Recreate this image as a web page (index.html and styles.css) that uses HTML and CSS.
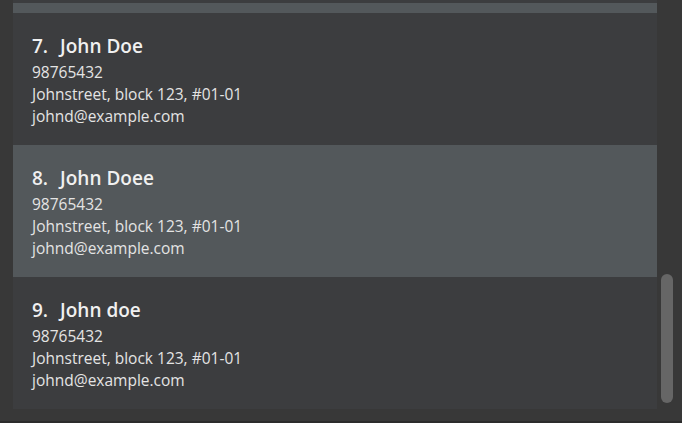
FILE: index.html
```html
<!DOCTYPE html>
<html>
<head>
<meta charset="utf-8">
<link rel="stylesheet" href="styles.css">
</head>
<body>
<div class="window">
  <div class="list">
    <div class="card card-partial">
      <div class="name-row"><span class="idx">6.</span><span class="name">John Doe</span></div>
      <div class="detail">98765432</div>
      <div class="detail">Johnstreet, block 123, #01-01</div>
      <div class="detail">johnd@example.com</div>
    </div>
    <div class="band"></div>
    <div class="card">
      <div class="name-row"><span class="idx">7.</span><span class="name">John Doe</span></div>
      <div class="detail">98765432</div>
      <div class="detail">Johnstreet, block 123, #01-01</div>
      <div class="detail">johnd@example.com</div>
    </div>
    <div class="card selected">
      <div class="name-row"><span class="idx">8.</span><span class="name">John Doee</span></div>
      <div class="detail">98765432</div>
      <div class="detail">Johnstreet, block 123, #01-01</div>
      <div class="detail">johnd@example.com</div>
    </div>
    <div class="card">
      <div class="name-row"><span class="idx">9.</span><span class="name">John doe</span></div>
      <div class="detail">98765432</div>
      <div class="detail">Johnstreet, block 123, #01-01</div>
      <div class="detail">johnd@example.com</div>
    </div>
  </div>
  <div class="scrollbar"><div class="thumb"></div></div>
</div>
<div class="bottom-line"></div>
</body>
</html>
```

FILE: styles.css
```css
html, body {
  margin: 0;
  padding: 0;
  background: #383838;
  width: 682px;
  height: 423px;
  overflow: hidden;
  font-family: "Open Sans", "Noto Sans", sans-serif;
}
.window {
  display: flex;
  height: 421px;
  padding-left: 13px;
  box-sizing: border-box;
}
.list {
  width: 644px;
  height: 409px;
  overflow: hidden;
  background: #3c3d3f;
}
.card {
  height: 132px;
  box-sizing: border-box;
  padding: 20px 0 0 19px;
  background: #3c3d3f;
}
.card-partial {
  margin-top: -129px;
}
.band {
  height: 10px;
  background: #53585b;
}
.selected {
  background: #53585b;
}
.name-row {
  display: flex;
  gap: 12px;
  font-size: 19px;
  font-weight: 600;
  line-height: 26px;
  color: #f0f0f0;
  margin-bottom: 2px;
}
.detail {
  font-size: 15.5px;
  line-height: 22px;
  color: #e4e4e4;
}
.scrollbar {
  width: 25px;
  padding: 274px 0 0 4px;
  box-sizing: border-box;
}
.thumb {
  width: 12px;
  height: 129px;
  border-radius: 6px;
  background: #666666;
}
.bottom-line {
  height: 2px;
  background: #2c2c2c;
}
```
